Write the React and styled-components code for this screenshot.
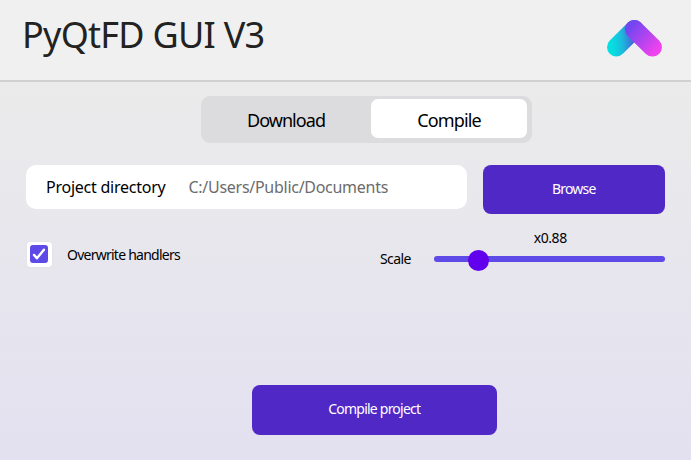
import React from "react";
import styled, { createGlobalStyle } from "styled-components";

const GlobalStyle = createGlobalStyle`
  * { box-sizing: border-box; }
  body { margin: 0; font-family: "Noto Sans", Tahoma, sans-serif; color: #000; }
`;

const Window = styled.div`
  display: flex;
  flex-direction: column;
  width: 691px;
  height: 460px;
  overflow: hidden;
`;

const Header = styled.header`
  display: flex;
  justify-content: space-between;
  align-items: flex-start;
  height: 82px;
  padding: 0 29px 0 22px;
  background: #f0f0f0;
  border-bottom: 2px solid #d0d0d0;
`;

const Title = styled.h1`
  margin: 11px 0 0;
  font-size: 36px;
  line-height: 48px;
  font-weight: 400;
  letter-spacing: -0.72px;
  color: #222;
  white-space: nowrap;
`;

const Logo = styled.svg`
  display: block;
  margin-top: 20px;
`;

const Main = styled.main`
  flex: 1;
  display: flex;
  flex-direction: column;
  padding: 14px 26px 0;
  background: linear-gradient(#ebebeb, #e3e1f0);
`;

const Label = styled.span`
  font-size: ${(p) => p.$size}px;
  line-height: 20px;
  letter-spacing: ${(p) => p.$track || 0}px;
  color: ${(p) => p.$color || "#000"};
  white-space: nowrap;
`;

const Tabs = styled.nav`
  display: flex;
  align-self: flex-start;
  width: 331px;
  height: 47px;
  margin-left: 175px;
  padding: 3px 5px 5px 0;
  border-radius: 9px;
  background: #dcdcde;
`;

const Tab = styled.button`
  width: ${(p) => p.$width}px;
  height: 39px;
  padding: 4px 0 0;
  border: 0;
  border-radius: 7px;
  background: ${(p) => (p.$active ? "#fff" : "transparent")};
  font-family: inherit;
  text-align: center;
`;

const DirectoryRow = styled.div`
  display: flex;
  gap: 16.5px;
  margin-top: 22px;
`;

const Field = styled.label`
  display: flex;
  align-items: center;
  gap: 23px;
  width: 440.5px;
  height: 44px;
  padding: 0 0 0 20px;
  border-radius: 10px;
  background: #fff;
`;

const PrimaryButton = styled.button`
  display: flex;
  align-items: center;
  justify-content: center;
  width: ${(p) => p.$width}px;
  height: ${(p) => p.$height}px;
  padding: 0 0 2px;
  border: 0;
  border-radius: 8px;
  background: #5028c6;
  font-family: inherit;
`;

const OptionsRow = styled.div`
  display: flex;
  align-items: flex-start;
  height: 54px;
  margin-top: 14px;
`;

const CheckOption = styled.label`
  display: flex;
  align-items: center;
  gap: 15px;
  width: 353px;
  margin: 14px 0 0 1px;
`;

const Box = styled.span`
  display: flex;
  width: 25px;
  height: 25px;
  padding: 3px;
  border-radius: 3px;
  background: #fff;
  box-shadow: 0 0 1px #c8c8d0;
`;

const ScaleLabel = styled.div`
  width: 54px;
  padding-top: 19px;
`;

const Slider = styled.div`
  display: flex;
  flex-direction: column;
  align-items: center;
  width: 230.5px;
`;

const Readout = styled.div`
  display: flex;
  height: 20px;
  padding-left: 2px;
`;

const Track = styled.div`
  display: flex;
  align-items: center;
  width: 100%;
  height: 6px;
  margin-top: 8px;
  padding-left: 34px;
  border-radius: 3px;
  background: #5e4ae6;
`;

const Knob = styled.div`
  flex: none;
  width: 21px;
  height: 21px;
  margin-top: 3px;
  border-radius: 50%;
  background: #6200ee;
`;

const Footer = styled.div`
  margin: 103px 0 0 226px;
`;

function BrandLogo() {
  return (
    <Logo width="55" height="37" viewBox="0 0 55 37" fill="none">
      <defs>
        <linearGradient id="teal" gradientUnits="userSpaceOnUse" x1="5" y1="26" x2="28" y2="24">
          <stop offset="0" stopColor="#06dfe1" />
          <stop offset="0.45" stopColor="#1cb9dc" />
          <stop offset="1" stopColor="#4460d8" />
        </linearGradient>
        <linearGradient id="pink" gradientUnits="userSpaceOnUse" x1="23" y1="8" x2="49" y2="30">
          <stop offset="0" stopColor="#7446f0" />
          <stop offset="1" stopColor="#ed42ee" />
        </linearGradient>
      </defs>
      <path d="M9.3 27.2 27.3 9.3" stroke="url(#teal)" strokeWidth="18.6" strokeLinecap="round" />
      <path d="M27.2 9.3 45.5 27.2" stroke="url(#pink)" strokeWidth="18.8" strokeLinecap="round" />
    </Logo>
  );
}

export default function App() {
  return (
    <Window>
      <GlobalStyle />
      <Header>
        <Title>PyQtFD GUI V3</Title>
        <BrandLogo />
      </Header>
      <Main>
        <Tabs>
          <Tab $width={170}>
            <Label $size={18} $track={-0.95}>Download</Label>
          </Tab>
          <Tab $width={156} $active>
            <Label $size={18} $track={-0.9}>Compile</Label>
          </Tab>
        </Tabs>
        <DirectoryRow>
          <Field>
            <Label $size={16} $track={-0.24}>Project directory</Label>
            <Label $size={16} $track={-0.28} $color="#6c6c6c">C:/Users/Public/Documents</Label>
          </Field>
          <PrimaryButton $width={181.5} $height={49}>
            <Label $size={14} $track={-0.8} $color="#fff">Browse</Label>
          </PrimaryButton>
        </DirectoryRow>
        <OptionsRow>
          <CheckOption>
            <Box>
              <svg width="18" height="18" viewBox="0 0 18 18" fill="none">
                <rect width="18" height="18" rx="3" fill="#5e4ae6" />
                <path d="M4 9.9 6.9 13.3 13.9 4.8" stroke="#fff" strokeWidth="2.4" strokeLinecap="round" strokeLinejoin="round" />
              </svg>
            </Box>
            <Label $size={14} $track={-0.75}>Overwrite handlers</Label>
          </CheckOption>
          <ScaleLabel>
            <Label $size={14} $track={-0.6}>Scale</Label>
          </ScaleLabel>
          <Slider>
            <Readout>
              <Label $size={14} $track={-0.4}>x0.88</Label>
            </Readout>
            <Track>
              <Knob />
            </Track>
          </Slider>
        </OptionsRow>
        <Footer>
          <PrimaryButton $width={244.5} $height={49.5}>
            <Label $size={14} $track={-0.78} $color="#fff">Compile project</Label>
          </PrimaryButton>
        </Footer>
      </Main>
    </Window>
  );
}
